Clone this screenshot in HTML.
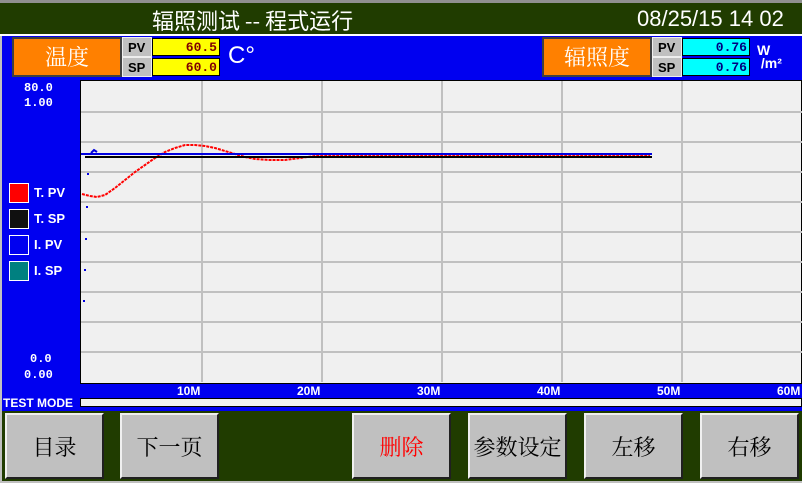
<html><head><style>
body{margin:0;width:802px;height:483px;overflow:hidden;background:#c0c0c0;font-family:"Liberation Sans","Noto Sans CJK SC",sans-serif;position:relative}
div{position:absolute;box-sizing:border-box}
.b{background:#c0c0c0;border:2px solid;border-color:#f0f0f0 #202020 #202020 #f0f0f0;font-size:22px;display:flex;align-items:center;justify-content:center;color:#000;font-family:"Noto Serif CJK SC","Liberation Serif",serif;top:413px;height:66px;width:99px}
.lab{background:#c0c0c0;color:#000;font-weight:bold;font-size:13px;width:30px;height:20px;padding-left:5px;line-height:19px;border:1px solid #eee}
.val{font-weight:bold;font-size:13px;text-align:right;padding-right:2px;height:18px;line-height:17px;border:1px solid #000;font-family:"Liberation Mono",monospace}
.w{color:#fff;font-weight:bold;font-size:12px;font-family:"Liberation Mono",monospace}
</style></head><body>
<div style="left:0;top:0;width:802px;height:3px;background:#909090"></div>
<div style="left:0;top:3px;width:802px;height:31px;background:#203c00;color:#fff;font-size:22px">
<span style="position:absolute;left:152px;top:1px;font-family:'Noto Sans CJK SC',sans-serif">辐照测试 -- 程式运行</span>
<span style="position:absolute;left:637px;top:3px">08/25/15 14 02</span></div>
<div style="left:0;top:34px;width:802px;height:2px;background:#fff"></div>
<div style="left:2px;top:36px;width:800px;height:375px;background:#0000f0"></div>
<div style="left:12px;top:37px;width:110px;height:40px;background:#ff8000;border:2px solid #404040;color:#fff;font-size:22px;text-align:center;line-height:36px;font-family:'Noto Serif CJK SC',serif">温度</div>
<div class="lab" style="left:122px;top:37px">PV</div><div class="val" style="left:152px;top:38px;width:68px;background:#ffff00;color:#800000">60.5</div>
<div class="lab" style="left:122px;top:57px">SP</div><div class="val" style="left:152px;top:58px;width:68px;background:#ffff00;color:#800000">60.0</div>
<div style="left:228px;top:42px;color:#fff;font-size:24px">C°</div>
<div style="left:542px;top:37px;width:110px;height:40px;background:#ff8000;border:2px solid #404040;color:#fff;font-size:22px;text-align:center;line-height:36px;font-family:'Noto Serif CJK SC',serif">辐照度</div>
<div class="lab" style="left:652px;top:37px">PV</div><div class="val" style="left:682px;top:38px;width:68px;background:#00ffff;color:#000080">0.76</div>
<div class="lab" style="left:652px;top:57px">SP</div><div class="val" style="left:682px;top:58px;width:68px;background:#00ffff;color:#000080">0.76</div>
<div style="left:757px;top:44px;color:#fff;font-weight:bold;font-size:14px;line-height:13px">W<br>&nbsp;/m²</div>
<div class="w" style="left:24px;top:81px">80.0</div><div class="w" style="left:24px;top:96px">1.00</div>
<div class="w" style="left:30px;top:352px">0.0</div><div class="w" style="left:24px;top:368px">0.00</div>
<div style="left:9px;top:183px;width:20px;height:20px;background:#ff0000;border:1px solid #fff"></div><div class="w" style="left:34px;top:185px;font-size:13px;font-family:'Liberation Sans'">T. PV</div>
<div style="left:9px;top:209px;width:20px;height:20px;background:#101010;border:1px solid #fff"></div><div class="w" style="left:34px;top:211px;font-size:13px;font-family:'Liberation Sans'">T. SP</div>
<div style="left:9px;top:235px;width:20px;height:20px;background:#0000f0;border:1px solid #fff"></div><div class="w" style="left:34px;top:237px;font-size:13px;font-family:'Liberation Sans'">I. PV</div>
<div style="left:9px;top:261px;width:20px;height:20px;background:#008080;border:1px solid #fff"></div><div class="w" style="left:34px;top:263px;font-size:13px;font-family:'Liberation Sans'">I. SP</div>
<svg style="position:absolute;left:80px;top:80px" width="722" height="304">
<rect x="0" y="0" width="722" height="304" fill="#f0f0f0" stroke="#000" stroke-width="2"/>
<g stroke="#c0c0c0" stroke-width="2">
<line x1="122" y1="1" x2="122" y2="302"/><line x1="242" y1="1" x2="242" y2="302"/><line x1="362" y1="1" x2="362" y2="302"/><line x1="482" y1="1" x2="482" y2="302"/><line x1="602" y1="1" x2="602" y2="302"/>
<line x1="1" y1="32" x2="722" y2="32"/><line x1="1" y1="62" x2="722" y2="62"/><line x1="1" y1="92" x2="722" y2="92"/><line x1="1" y1="122" x2="722" y2="122"/><line x1="1" y1="152" x2="722" y2="152"/><line x1="1" y1="182" x2="722" y2="182"/><line x1="1" y1="212" x2="722" y2="212"/><line x1="1" y1="242" x2="722" y2="242"/><line x1="1" y1="272" x2="722" y2="272"/>
</g>
<path d="M2,114 L10,116 17,117 25,115 35,108 45,100 55,92 65,85 75,78 85,72 95,68 105,65 115,65 125,66 135,68 145,71 155,74 165,77 175,79 190,80 205,80 220,78 235,76 250,75 570,76" fill="none" stroke="#ff0000" stroke-width="2" stroke-dasharray="3 1"/>
<line x1="5" y1="77" x2="572" y2="77" stroke="#000" stroke-width="2"/>
<line x1="1" y1="74" x2="572" y2="74" stroke="#0000e0" stroke-width="2"/>
<path d="M11,73 L14,70 17,72" fill="none" stroke="#0000e0" stroke-width="2"/>
<g fill="#0000e0"><rect x="7" y="93" width="2" height="2"/><rect x="6" y="126" width="2" height="2"/><rect x="5" y="158" width="2" height="2"/><rect x="4" y="189" width="2" height="2"/><rect x="3" y="220" width="2" height="2"/></g>
</svg>
<div class="w" style="left:177px;top:384px;font-size:12px;font-family:'Liberation Sans'">10M</div>
<div class="w" style="left:297px;top:384px;font-size:12px;font-family:'Liberation Sans'">20M</div>
<div class="w" style="left:417px;top:384px;font-size:12px;font-family:'Liberation Sans'">30M</div>
<div class="w" style="left:537px;top:384px;font-size:12px;font-family:'Liberation Sans'">40M</div>
<div class="w" style="left:657px;top:384px;font-size:12px;font-family:'Liberation Sans'">50M</div>
<div class="w" style="left:777px;top:384px;font-size:12px;font-family:'Liberation Sans'">60M</div>
<div class="w" style="left:3px;top:396px;font-size:12px;font-family:'Liberation Sans'">TEST MODE</div>
<div style="left:80px;top:398px;width:722px;height:9px;background:#f0f0f0;border:1px solid #000"></div>
<div style="left:2px;top:411px;width:800px;height:70px;background:#203c00"></div>
<div class="b" style="left:5px">目录</div>
<div class="b" style="left:120px">下一页</div>
<div class="b" style="left:352px;color:#ff0000">删除</div>
<div class="b" style="left:468px">参数设定</div>
<div class="b" style="left:584px">左移</div>
<div class="b" style="left:700px">右移</div>
</body></html>
